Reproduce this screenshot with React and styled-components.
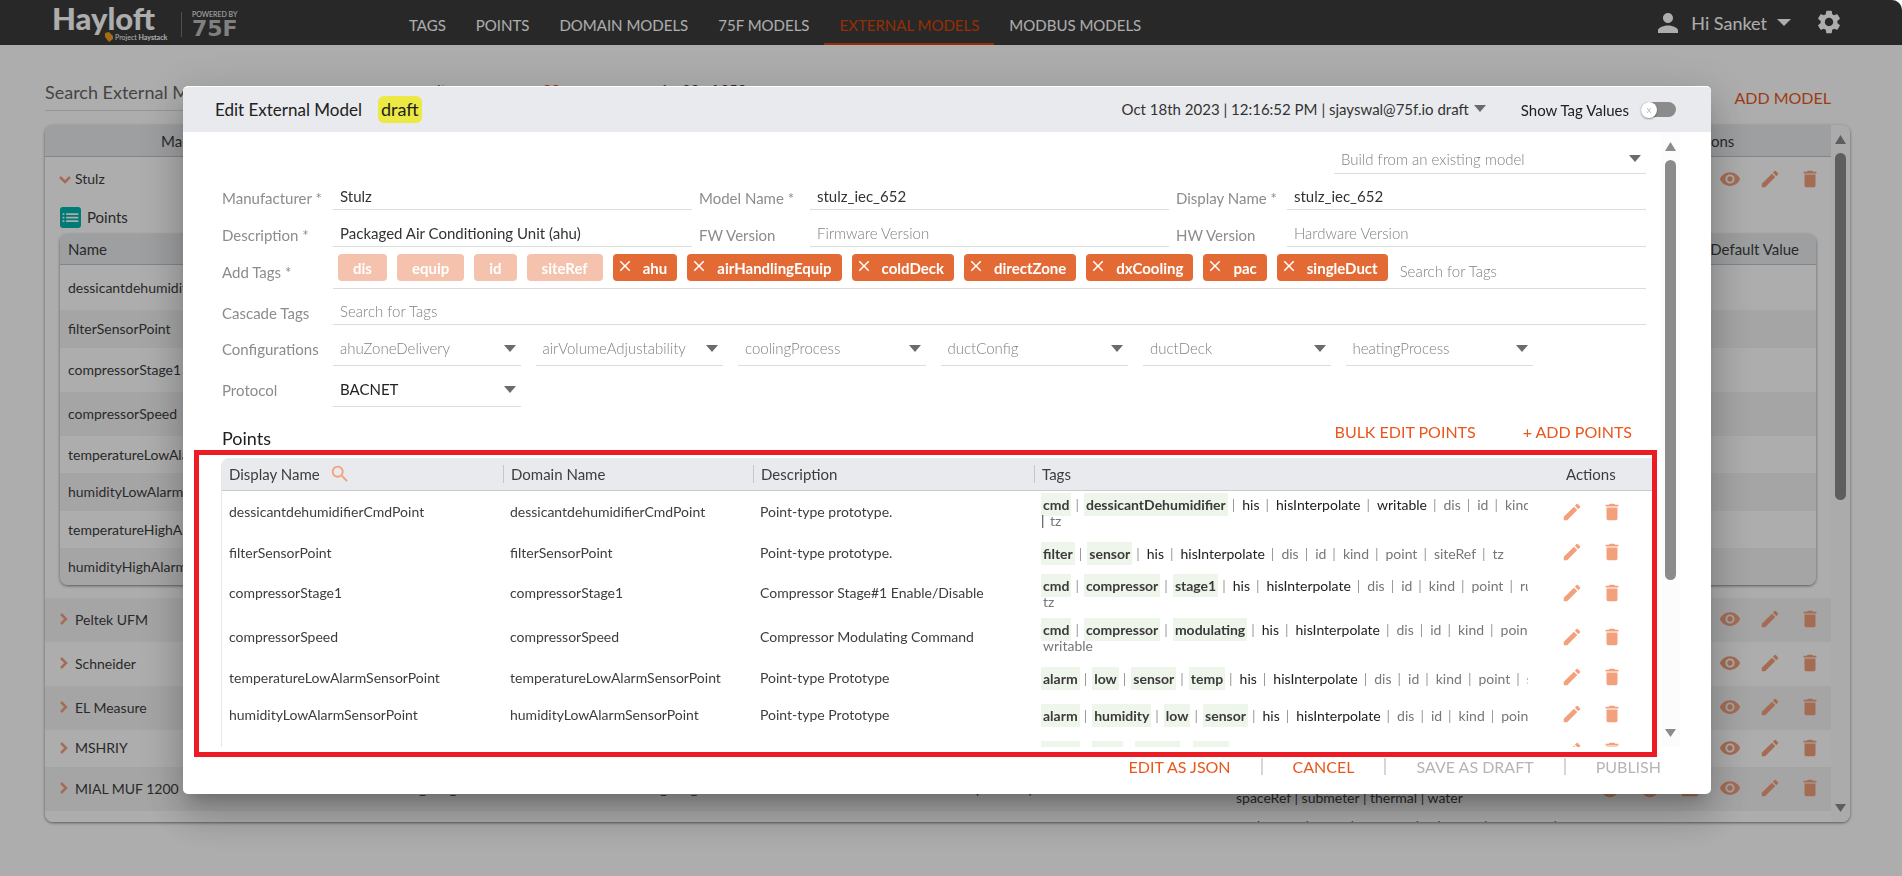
import React from 'react'
import styled, { createGlobalStyle } from 'styled-components'
import {
    MdArchive, MdCheckCircle, MdClose, MdDelete, MdEdit, MdInfo, MdList, MdPerson, MdSearch, MdSettings, MdVisibility,
} from 'react-icons/md'

const GlobalStyle = createGlobalStyle`
    *{
        box-sizing:border-box;
    }
    body{
        margin:0;
        background:#fff;
        color:#3d3d3d;
        font-family:Lato, "Liberation Sans", sans-serif;
        font-size:14px;
        overflow:hidden;
    }
    button, input, select{
        font-family:inherit;
        background:none;
        border:0;
        padding:0;
        margin:0;
    }
    button{
        cursor:pointer;
    }
`
const Page = styled.div`
    height:100vh;
    display:flex;
    flex-direction:column;
`

/* top bar */
const TopBar = styled.header`
    display:flex;
    align-items:stretch;
    flex:none;
    height:45px;
    padding:0 59px 0 50px;
    background:#3c3c3c;
    border-top-right-radius:10px;
`
const Logo = styled.svg`
    width:200px;
    height:45px;
    margin-right:144px;
`
const Nav = styled.nav`
    display:flex;
    flex:1;
`
const NavLink = styled.a`
    display:flex;
    align-items:center;
    padding:6px 15px 0;
    font-size:15px;
    text-decoration:none;
    color:${({ $active }) => ($active ? '#dc4405' : '#fff')};
    border-bottom:2px solid ${({ $active }) => ($active ? '#dc4405' : 'transparent')};
`
const UserArea = styled.div`
    display:flex;
    align-items:center;
    gap:24px;
    color:#fff;
`
const UserButton = styled.button`
    display:flex;
    align-items:center;
    gap:8px;
    color:#fff;
    font-size:18px;
    & > span{
        margin-right:2px;
    }
`
const GearButton = styled.button`
    display:flex;
    padding-bottom:2px;
    color:#fff;
`

/* page behind the dialog */
const Main = styled.main`
    display:flex;
    flex-direction:column;
    flex:1;
    min-height:0;
    padding:25px 52px 54px 45px;
`
const SearchRow = styled.div`
    display:flex;
    justify-content:space-between;
    align-items:center;
    height:55px;
    padding-right:19px;
    flex:none;
`
const SearchInput = styled.input`
    align-self:flex-start;
    width:340px;
    height:41px;
    padding-top:4px;
    font-size:18px;
    color:#666;
    border-bottom:1px solid #ddd;
    &::placeholder{
        color:#666;
    }
`
const ResultText = styled.span`
    flex:1;
    padding:0 0 16px 24px;
    font-size:15px;
    & > b{
        color:#e64a19;
        font-weight:400;
        margin:0 96px 0 26px;
    }
`
const ListCard = styled.section`
    display:flex;
    flex:1;
    min-height:0;
    overflow:hidden;
    border-radius:8px;
    box-shadow:0 1px 3px rgba(0,0,0,.5);
`
const ListScroll = styled.div`
    flex:1;
    min-width:0;
    overflow:hidden;
`
const ListHead = styled.div`
    display:grid;
    grid-template-columns:322px 241px 241px 383px 1fr 243px;
    align-items:center;
    height:32px;
    text-align:center;
    font-size:15px;
    background:#e8eaec;
    border-bottom:1px solid #c4c4c4;
`
const ListRow = styled.div`
    display:grid;
    grid-template-columns:335px 241px 241px 360px 1fr 243px;
    align-items:center;
    height:${({ $height }) => $height}px;
    padding:0 0 2px 14px;
    background:${({ $shaded }) => ($shaded ? '#f4f4f4' : '#fff')};
`
const ModelName = styled.span`
    display:flex;
    align-items:center;
    gap:4px;
`
const RowTags = styled.span`
    padding-top:${({ $low }) => ($low ? 18 : 0)}px;
    white-space:nowrap;
`
const RowActions = styled.span`
    display:flex;
    justify-content:flex-end;
    gap:18px;
    padding-right:10px;
`
const IconButton = styled.button`
    display:flex;
    color:#f3a07d;
`
const PointsLine = styled.div`
    display:flex;
    align-items:center;
    gap:6px;
    height:32px;
    padding:0 0 2px 15px;
    font-size:15px;
    & > svg{
        background:#00b5ad;
        color:#fff;
        border-radius:3px;
    }
`
const InnerTable = styled.table`
    width:calc(100% - 30px);
    margin:0 15px 13px;
    border-spacing:0;
    border-radius:8px;
    overflow:hidden;
    box-shadow:0 1px 3px rgba(0,0,0,.5);
    th, td{
        padding:0 8px 1px;
        text-align:left;
        font-weight:400;
    }
    th{
        height:31px;
        font-size:15px;
        background:#e8eaec;
        border-bottom:1px solid #c4c4c4;
    }
    th:last-child{
        text-align:right;
        padding-right:17px;
    }
    tbody tr:nth-child(even){
        background:#f4f4f4;
    }
`
const InnerRow = styled.tr`
    height:${({ $height }) => $height}px;
`

/* scrollbar */
const Bar = styled.div`
    display:flex;
    flex-direction:column;
    align-items:center;
    flex:none;
    width:19px;
    padding:10px 0;
    background:#fcfcfc;
`
const Track = styled.div`
    flex:1;
    width:11px;
    margin:9px 0;
`
const Thumb = styled.div`
    height:${({ $size }) => $size}%;
    border-radius:6px;
    background:#8b8b8b;
`

/* dialog */
const Overlay = styled.div`
    position:fixed;
    inset:0;
    display:flex;
    padding:86px 191px 82px 183px;
    background:rgba(0,0,0,.32);
    border-top-right-radius:10px;
`
const Dialog = styled.div`
    position:relative;
    display:flex;
    flex-direction:column;
    flex:1;
    min-width:0;
    background:#fff;
    border-radius:5px;
    box-shadow:0 11px 15px -7px rgba(0,0,0,.2), 0 24px 38px 3px rgba(0,0,0,.14), 0 9px 46px 8px rgba(0,0,0,.12);
`
const DialogHead = styled.header`
    display:flex;
    align-items:center;
    flex:none;
    height:46px;
    padding:0 35px 0 32px;
    background:#e9eaed;
    border-top:1px solid #fff;
    border-radius:5px 5px 0 0;
    color:#212121;
`
const Title = styled.h1`
    margin:0 16px 0 0;
    font-size:17px;
    font-weight:400;
`
const Status = styled.span`
    padding:0 3px;
    line-height:27px;
    font-size:18px;
    border-radius:6px;
    background:#ece844;
`
const VersionButton = styled.button`
    display:flex;
    align-items:center;
    gap:5px;
    margin:0 35px 0 auto;
    padding-bottom:2px;
    font-size:15px;
    color:#333;
`
const ToggleLabel = styled.label`
    display:flex;
    align-items:center;
    gap:12px;
    font-size:15px;
`
const Toggle = styled.input`
    appearance:none;
    display:flex;
    align-items:center;
    width:35px;
    height:15px;
    margin:0;
    border-radius:8px;
    background:#8b8b8b;
    &::before{
        content:"x";
        width:16px;
        height:16px;
        border-radius:50%;
        background:#fff;
        box-shadow:0 1px 2px rgba(0,0,0,.4);
        color:#bbb;
        font-size:10px;
        line-height:14px;
        text-align:center;
    }
`
const DialogBody = styled.div`
    display:flex;
    flex:1;
    min-height:0;
    padding:0 31px 0 38px;
`
const Form = styled.form`
    flex:1;
    min-width:0;
    padding-top:14px;
    overflow:hidden;
`
const FormInner = styled.div`
    padding-right:15px;
`
const BuildRow = styled.div`
    display:flex;
    justify-content:flex-end;
`
const FieldGrid = styled.div`
    display:grid;
    grid-template-columns:112px 1fr 118px 1fr 118px 1fr;
    margin-bottom:1px;
`
const FieldRow = styled.div`
    display:grid;
    grid-template-columns:112px 1fr;
    height:${({ $height }) => $height}px;
`
const Label = styled.label`
    align-self:end;
    padding:0 0 ${({ $low }) => ($low ? 3 : 8)}px ${({ $inset }) => ($inset ? 7 : 1)}px;
    line-height:18px;
    font-size:15px;
    color:#8c8c8c;
`
const TextInput = styled.input`
    width:100%;
    min-width:0;
    height:36px;
    padding:8px 7px 0;
    font-size:15px;
    color:#333;
    border-bottom:1px solid #dcdcdc;
    outline:0;
    &::placeholder{
        color:#808080;
        font-weight:300;
        opacity:1;
    }
`
const SelectBox = styled.div`
    display:flex;
    align-items:center;
    align-self:end;
    height:${({ $height }) => $height || 33}px;
    width:${({ $width }) => $width || 'auto'};
    min-width:0;
    padding:0 5px 2px 7px;
    border-bottom:1px solid #dcdcdc;
`
const Select = styled.select`
    appearance:none;
    flex:1;
    min-width:0;
    font-size:15px;
    font-weight:${({ $filled }) => ($filled ? 400 : 300)};
    color:${({ $filled }) => ($filled ? '#222' : '#808080')};
    outline:0;
`
const SelectRow = styled.div`
    display:grid;
    grid-template-columns:repeat(6, 1fr);
    gap:15px;
    padding-right:113px;
`
const TagField = styled.div`
    display:flex;
    align-items:flex-start;
    gap:10px;
    padding:6px 0 0 5px;
    border-bottom:1px solid #dcdcdc;
    & > input{
        flex:1;
        min-width:0;
        height:28px;
        padding:5px 0 0 2px;
        border:0;
    }
`
const Chip = styled.span`
    display:flex;
    gap:9px;
    height:27px;
    padding:${({ $fixed }) => ($fixed ? '0 15px' : '0 10px 0 3px')};
    line-height:28px;
    font-size:15px;
    font-weight:700;
    color:#fff;
    border-radius:4px;
    background:${({ $fixed }) => ($fixed ? '#f4c2ad' : '#e36a35')};
`
const ChipClose = styled.button`
    display:flex;
    align-items:center;
    height:24px;
    color:#fff;
`
const PointsHead = styled.div`
    display:flex;
    align-items:center;
    height:50px;
    padding:0 29px 2px 1px;
    margin-bottom:1px;
    & > h2{
        flex:1;
        margin:0;
        padding-top:13px;
        font-size:18px;
        font-weight:400;
        color:#212121;
    }
`
const TextButton = styled.button`
    font-size:16px;
    color:${({ disabled }) => (disabled ? '#b5b5b5' : '#e8571c')};
    margin-left:${({ $gap }) => $gap || 0}px;
`
const PointsTable = styled.table`
    table-layout:fixed;
    width:calc(100% - 9px);
    border-spacing:0;
    border-left:1px solid #e6e6e6;
    border-radius:8px 0 0 0;
    overflow:hidden;
    th, td{
        padding:0 7px 3px;
        text-align:left;
        font-weight:400;
    }
    td:nth-child(4){
        padding:0 0 0 7px;
    }
    th{
        height:33px;
        padding:0;
        font-size:15px;
        background:#e9eaed;
        border-bottom:1px solid #c8cacc;
    }
    th:last-child{
        padding-left:38px;
    }
`
const HeadCell = styled.div`
    display:flex;
    align-items:center;
    gap:9px;
    height:18px;
    padding-left:${({ $line }) => ($line ? 7 : 6)}px;
    border-left:1px solid ${({ $line }) => ($line ? '#c4c6c8' : 'transparent')};
    & > button{
        color:#f3a07d;
    }
`
const TagCell = styled.div`
    height:${({ $lines }) => ($lines > 1 ? 44 : 37)}px;
    padding-top:${({ $lines }) => ($lines > 1 ? 6 : 11)}px;
    line-height:16px;
    white-space:nowrap;
    overflow:hidden;
`
const Tag = styled.span`
    display:inline-block;
    padding:0 2px;
    color:${({ $kind }) => ($kind === 'dim' ? '#777' : '#212121')};
`
const MarkedTag = styled.span`
    padding:3px 2px;
    font-weight:700;
    color:#3a3a3a;
    background:#eef5ea;
`
const Divider = styled.span`
    padding:0 5px 0 4px;
    color:#999;
`
const PointActions = styled.div`
    display:flex;
    gap:18px;
    padding-left:26px;
`
const DialogFoot = styled.footer`
    display:flex;
    justify-content:flex-end;
    align-items:center;
    flex:none;
    height:47px;
    padding:0 50px 8px;
`
const FootLine = styled.i`
    width:2px;
    height:17px;
    margin:0 30px;
    background:#d6d6d6;
`
const Highlight = styled.div`
    position:absolute;
    inset:364px 54px 37px 11px;
    border:5px solid #ed1c24;
    pointer-events:none;
`

const navItems = ['TAGS', 'POINTS', 'DOMAIN MODELS', '75F MODELS', 'EXTERNAL MODELS', 'MODBUS MODELS']

const innerRows = [
    ['dessicantdehumidifierCmdPoint', 45],
    ['filterSensorPoint', 38],
    ['compressorStage1', 44],
    ['compressorSpeed', 44],
    ['temperatureLowAlarmSensorPoint', 37],
    ['humidityLowAlarmSensorPoint', 38],
    ['temperatureHighAlarmSensorPoint', 37],
    ['humidityHighAlarmSensorPoint', 37],
]

const models = [
    { name: 'Peltek UFM', height: 44 },
    { name: 'Schneider', height: 44 },
    { name: 'EL Measure', height: 44 },
    { name: 'MSHRIY', height: 37 },
    {
        name: 'MIAL MUF 1200',
        height: 44,
        model: 'mial_muf_1200',
        description: 'Ultrasonic Flow (Modbus)',
        tags: 'spaceRef | submeter | thermal | water',
    },
    { name: '', height: 32, tags: 'dis | model | equip | equipRef | id | meter | siteMeter |' },
]

const fixedTags = ['dis', 'equip', 'id', 'siteRef']
const modelTags = ['ahu', 'airHandlingEquip', 'coldDeck', 'directZone', 'dxCooling', 'pac', 'singleDuct']
const configurations = [
    'ahuZoneDelivery', 'airVolumeAdjustability', 'coolingProcess', 'ductConfig', 'ductDeck', 'heatingProcess',
]

// marked tags get a tint, dim ones are inherited, rest goes on the second line
const points = [
    {
        name: 'dessicantdehumidifierCmdPoint',
        description: 'Point-type prototype.',
        marked: ['cmd', 'dessicantDehumidifier'],
        plain: ['his', 'hisInterpolate', 'writable'],
        dim: ['dis', 'id', 'kind', 'point', 'siteRef'],
        rest: ['', 'tz'],
    },
    {
        name: 'filterSensorPoint',
        description: 'Point-type prototype.',
        marked: ['filter', 'sensor'],
        plain: ['his', 'hisInterpolate'],
        dim: ['dis', 'id', 'kind', 'point', 'siteRef', 'tz'],
    },
    {
        name: 'compressorStage1',
        description: 'Compressor Stage#1 Enable/Disable',
        marked: ['cmd', 'compressor', 'stage1'],
        plain: ['his', 'hisInterpolate'],
        dim: ['dis', 'id', 'kind', 'point', 'run', 'siteRef'],
        rest: ['tz'],
    },
    {
        name: 'compressorSpeed',
        description: 'Compressor Modulating Command',
        marked: ['cmd', 'compressor', 'modulating'],
        plain: ['his', 'hisInterpolate'],
        dim: ['dis', 'id', 'kind', 'point', 'siteRef', 'tz'],
        rest: ['writable'],
    },
    {
        name: 'temperatureLowAlarmSensorPoint',
        description: 'Point-type Prototype',
        marked: ['alarm', 'low', 'sensor', 'temp'],
        plain: ['his', 'hisInterpolate'],
        dim: ['dis', 'id', 'kind', 'point', 'siteRef', 'tz'],
    },
    {
        name: 'humidityLowAlarmSensorPoint',
        description: 'Point-type Prototype',
        marked: ['alarm', 'humidity', 'low', 'sensor'],
        plain: ['his', 'hisInterpolate'],
        dim: ['dis', 'id', 'kind', 'point', 'siteRef', 'tz'],
    },
    {
        name: 'temperatureHighAlarmSensorPoint',
        description: 'Point-type Prototype',
        marked: ['alarm', 'high', 'sensor', 'temp'],
        plain: ['his', 'hisInterpolate'],
        dim: ['dis', 'id', 'kind', 'point', 'siteRef', 'tz'],
    },
]

const Caret = ({ up, width = 12, height = 7, color = '#6b6b6b' }) => (
    <svg width={width} height={height} viewBox="0 0 12 7" preserveAspectRatio="none" aria-hidden="true">
        <path d={up ? 'M0 7L6 0L12 7Z' : 'M0 0L6 7L12 0Z'} fill={color} />
    </svg>
)

const Chevron = ({ open }) => (
    <svg width="12" height="12" viewBox="0 0 12 12" fill="none" stroke="#f3a07d" strokeWidth="2.500" aria-hidden="true">
        <path d={open ? 'M1 4L6 9L11 4' : 'M2 1L7 6L2 11'} />
    </svg>
)

const ScrollBar = ({ size }) => (
    <Bar>
        <Caret up width={11} height={9} color="#8b8b8b" />
        <Track><Thumb $size={size} /></Track>
        <Caret width={11} height={8} color="#8b8b8b" />
    </Bar>
)

const HayloftLogo = () => (
    <Logo viewBox="0 0 200 45" role="img" aria-label="Hayloft">
        <g fill="#fff" fontFamily="Lato, sans-serif">
            <text x="2" y="30" fontSize="31" fontWeight="900">Hayloft</text>
            <text x="65" y="40" fontSize="7">Project <tspan fontWeight="700">Haystack</tspan></text>
            <text x="142" y="17" fontSize="7">POWERED BY</text>
            <text x="142" y="36" fontSize="22" fontFamily="DejaVu Sans, sans-serif" fontWeight="700" fill="#bdbdbd">75F</text>
        </g>
        <path d="M55 33L59 32L63 36V39L59 42L55 37Z" fill="#f0a020" />
        <path d="M131.500 12V37" stroke="#777" />
    </Logo>
)

const Actions = ({ view, extra }) => (
    <>
        {extra && <IconButton type="button" aria-label="Approve"><MdCheckCircle size={22} /></IconButton>}
        {extra && <IconButton type="button" aria-label="Info"><MdInfo size={22} /></IconButton>}
        {extra && <IconButton type="button" aria-label="Archive"><MdArchive size={22} /></IconButton>}
        {view && <IconButton type="button" aria-label="View"><MdVisibility size={22} /></IconButton>}
        <IconButton type="button" aria-label="Edit"><MdEdit size={22} /></IconButton>
        <IconButton type="button" aria-label="Delete"><MdDelete size={22} /></IconButton>
    </>
)

const Field = ({ id, label, inset, ...rest }) => (
    <>
        <Label htmlFor={id} $inset={inset} $low>{label}</Label>
        <TextInput id={id} {...rest} />
    </>
)

const SelectField = ({ label, id, filled, ...rest }) => (
    <SelectBox {...rest}>
        <Select id={id} aria-label={label} $filled={filled}><option>{label}</option></Select>
        <Caret />
    </SelectBox>
)

const Tags = ({ point }) => {
    const all = [
        ...point.marked.map(text => ({ text, kind: 'marked' })),
        ...point.plain.map(text => ({ text, kind: 'plain' })),
        ...point.dim.map(text => ({ text, kind: 'dim' })),
    ]
    return (
        <TagCell $lines={point.rest ? 2 : 1}>
            <div>
                {all.map((tag, i) => (
                    <React.Fragment key={tag.text}>
                        {i > 0 && <Divider>|</Divider>}
                        {tag.kind === 'marked' ? <MarkedTag>{tag.text}</MarkedTag> : <Tag $kind={tag.kind}>{tag.text}</Tag>}
                    </React.Fragment>
                ))}
            </div>
            {point.rest && (
                <div>
                    {point.rest.map((text, i) => (
                        <React.Fragment key={text}>
                            {i > 0 && <span>| </span>}
                            {text && <Tag $kind="dim">{text}</Tag>}
                        </React.Fragment>
                    ))}
                </div>
            )}
        </TagCell>
    )
}

const ModelList = () => (
    <Main>
        <SearchRow>
            <SearchInput aria-label="Search External Model" placeholder="Search External Model" />
            <ResultText>results per page <b>20</b> 1 - 20 of 253</ResultText>
            <TextButton>ADD MODEL</TextButton>
        </SearchRow>
        <ListCard>
            <ListScroll>
                <ListHead>
                    <span>Manufacturer</span><span>Model Name</span><span>Display Name</span>
                    <span>Description</span><span>Tags</span><span>Actions</span>
                </ListHead>
                <ListRow $height={45}>
                    <ModelName><Chevron open />Stulz</ModelName>
                    <span /><span /><span /><span />
                    <RowActions><Actions view /></RowActions>
                </ListRow>
                <PointsLine><MdList size={21} />Points</PointsLine>
                <InnerTable>
                    <thead><tr><th>Name</th><th>Default Value</th></tr></thead>
                    <tbody>
                        {innerRows.map(([name, height]) => <InnerRow key={name} $height={height}><td>{name}</td><td /></InnerRow>)}
                    </tbody>
                </InnerTable>
                {models.map((m, i) => (
                    <ListRow key={m.name} $height={m.height} $shaded={i % 2 === 0}>
                        <ModelName>{m.name && <Chevron />}{m.name}</ModelName>
                        <span>{m.model}</span>
                        <span>{m.model}</span>
                        <span>{m.description}</span>
                        <RowTags $low={!!m.name}>{m.tags}</RowTags>
                        <RowActions>{m.name && <Actions view extra={!!m.tags} />}</RowActions>
                    </ListRow>
                ))}
            </ListScroll>
            <ScrollBar size={54} />
        </ListCard>
    </Main>
)

const EditDialog = () => (
    <Overlay>
        <Dialog role="dialog" aria-labelledby="dialog-title">
            <DialogHead>
                <Title id="dialog-title">Edit External Model</Title>
                <Status>draft</Status>
                <VersionButton>Oct 18th 2023 | 12:16:52 PM | sjayswal@75f.io draft <Caret /></VersionButton>
                <ToggleLabel>Show Tag Values<Toggle type="checkbox" role="switch" /></ToggleLabel>
            </DialogHead>
            <DialogBody>
                <Form>
                    <FormInner>
                        <BuildRow><SelectField label="Build from an existing model" $width="312px" $height={28} /></BuildRow>
                        <FieldGrid>
                            <Field id="manufacturer" label="Manufacturer *" defaultValue="Stulz" />
                            <Field id="model" label="Model Name *" inset defaultValue="stulz_iec_652" />
                            <Field id="display" label="Display Name *" inset defaultValue="stulz_iec_652" />
                        </FieldGrid>
                        <FieldGrid>
                            <Field id="description" label="Description *" defaultValue="Packaged Air Conditioning Unit (ahu)" />
                            <Field id="fw" label="FW Version" inset placeholder="Firmware Version" />
                            <Field id="hw" label="HW Version" inset placeholder="Hardware Version" />
                        </FieldGrid>
                        <FieldRow $height={41}>
                            <Label htmlFor="tags">Add Tags *</Label>
                            <TagField>
                                {fixedTags.map(tag => <Chip key={tag} $fixed>{tag}</Chip>)}
                                {modelTags.map(tag => (
                                    <Chip key={tag}>
                                        <ChipClose type="button" aria-label={`Remove ${tag}`}><MdClose size={18} /></ChipClose>
                                        {tag}
                                    </Chip>
                                ))}
                                <TextInput id="tags" placeholder="Search for Tags" />
                            </TagField>
                        </FieldRow>
                        <FieldRow $height={36}>
                            <Label htmlFor="cascade" $low>Cascade Tags</Label>
                            <TextInput id="cascade" placeholder="Search for Tags" />
                        </FieldRow>
                        <FieldRow $height={41}>
                            <Label as="span">Configurations</Label>
                            <SelectRow>
                                {configurations.map(name => <SelectField key={name} label={name} />)}
                            </SelectRow>
                        </FieldRow>
                        <FieldRow $height={41}>
                            <Label htmlFor="protocol">Protocol</Label>
                            <SelectField id="protocol" label="BACNET" filled $width="188px" />
                        </FieldRow>
                    </FormInner>
                    <PointsHead>
                        <h2>Points</h2>
                        <TextButton type="button">BULK EDIT POINTS</TextButton>
                        <TextButton type="button" $gap={47}>+ ADD POINTS</TextButton>
                    </PointsHead>
                    <PointsTable>
                        <colgroup>
                            <col width="281" /><col width="250" /><col width="281" /><col /><col width="124" />
                        </colgroup>
                        <thead>
                            <tr>
                                <th>
                                    <HeadCell>
                                        Display Name
                                        <IconButton type="button" aria-label="Search"><MdSearch size={22} /></IconButton>
                                    </HeadCell>
                                </th>
                                <th><HeadCell $line>Domain Name</HeadCell></th>
                                <th><HeadCell $line>Description</HeadCell></th>
                                <th><HeadCell $line>Tags</HeadCell></th>
                                <th>Actions</th>
                            </tr>
                        </thead>
                        <tbody>
                            {points.map(point => (
                                <tr key={point.name}>
                                    <td>{point.name}</td>
                                    <td>{point.name}</td>
                                    <td>{point.description}</td>
                                    <td><Tags point={point} /></td>
                                    <td><PointActions><Actions /></PointActions></td>
                                </tr>
                            ))}
                        </tbody>
                    </PointsTable>
                </Form>
                <ScrollBar size={75} />
            </DialogBody>
            <DialogFoot>
                <TextButton>EDIT AS JSON</TextButton>
                <FootLine />
                <TextButton>CANCEL</TextButton>
                <FootLine />
                <TextButton disabled>SAVE AS DRAFT</TextButton>
                <FootLine />
                <TextButton disabled>PUBLISH</TextButton>
            </DialogFoot>
            <Highlight />
        </Dialog>
    </Overlay>
)

const App = () => (
    <>
        <GlobalStyle />
        <Page>
            <TopBar>
                <HayloftLogo />
                <Nav>
                    {navItems.map(item => <NavLink key={item} href="#" $active={item === 'EXTERNAL MODELS'}>{item}</NavLink>)}
                </Nav>
                <UserArea>
                    <UserButton>
                        <MdPerson size={30} />
                        <span>Hi Sanket</span>
                        <Caret width={14} color="#fff" />
                    </UserButton>
                    <GearButton aria-label="Settings"><MdSettings size={28} /></GearButton>
                </UserArea>
            </TopBar>
            <ModelList />
        </Page>
        <EditDialog />
    </>
)

export default App
